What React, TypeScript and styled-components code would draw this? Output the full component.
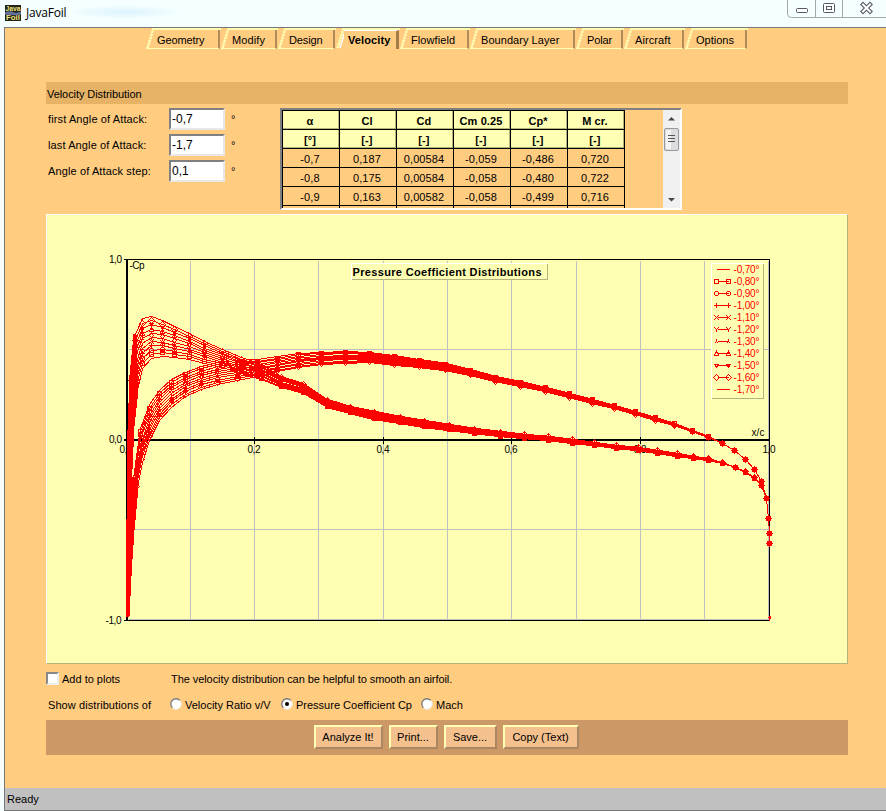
import React from "react";
import styled, { createGlobalStyle, css } from "styled-components";

const C = {
  orange: "#ffcc80",
  yellow: "#ffffb3",
  band: "#e6b366",
  footer: "#cc9966",
  button: "#f4c08e",
  status: "#c0c0c0",
};

const Global = createGlobalStyle`
  body { margin: 0; background: #f5ffff; overflow: hidden; }
  * { box-sizing: border-box; }
`;

const Window = styled.div`
  width: 886px;
  height: 811px;
  display: flex;
  flex-direction: column;
  font: 11px/14px "Liberation Sans", Arial, sans-serif;
  color: #000;
  white-space: nowrap;
  background: #f5ffff;
`;
const TitleBar = styled.header`
  height: 27px;
  flex: none;
  display: flex;
  align-items: flex-start;
  padding-left: 5px;
  background: radial-gradient(ellipse 60px 7px at 125px 12px, #dcf3fc, transparent);
`;
const AppIcon = styled.svg`
  width: 16px;
  height: 16px;
  margin-top: 5px;
  overflow: visible;
`;
const WindowTitle = styled.span`
  font: 12px/16px "Open Sans", "Noto Sans", sans-serif;
  letter-spacing: -0.2px;
  margin: 5px auto 0 5px;
`;
const WindowControls = styled.svg`
  width: 99px;
  height: 18px;
`;
const Client = styled.main`
  flex: 1;
  margin-left: 4px;
  border-top: 1px solid #777;
  border-left: 1px solid #777;
  border-bottom: 1px solid #777;
  background: ${C.orange};
  display: flex;
  flex-direction: column;
`;
const Tabs = styled.nav`
  display: flex;
  height: 21px;
  margin-left: 141px;
`;
const TabBox = styled.div<{ $w: number }>`
  width: ${(p) => p.$w}px;
  display: flex;
`;
const Slant = styled.svg`
  width: 8px;
  height: 21px;
  flex: none;
`;
const TabFace = styled.div`
  flex: 1;
  border-top: 2px solid ${C.yellow};
  padding-right: 1px;
  display: flex;
`;
const TabLabel = styled.div<{ $active?: boolean; $ls: number }>`
  flex: 1;
  padding: 3px 0 0 3px;
  letter-spacing: ${(p) => p.$ls}px;
  border-right: 2px solid #b28c58;
  border-bottom: 1px solid ${C.yellow};
  ${(p) =>
    p.$active &&
    css`
      font-weight: bold;
      padding: 2px 0 0 4px;
      border-top: 1px solid #fff;
      border-right: 3px solid #a67c4d;
      border-bottom: 0;
    `}
`;
const Content = styled.div`
  width: 802px;
  margin: 33px 0 0 41px;
  flex: 1;
`;
const Heading = styled.div`
  height: 22px;
  padding: 5px 0 0 1px;
  background: ${C.band};
  letter-spacing: -0.07px;
`;
const Settings = styled.section`
  display: flex;
  height: 110px;
  padding-top: 4px;
`;
const Fields = styled.div`
  width: 234px;
  display: flex;
  flex-direction: column;
  gap: 4px;
`;
const Field = styled.label`
  display: grid;
  grid-template-columns: 123px 56px 20px;
  height: 22px;
`;
const FieldText = styled.span`
  padding: 4px 0 0 2px;
  letter-spacing: 0.12px;
`;
const Unit = styled.span`
  padding: 4px 0 0 6px;
`;
const Input = styled.input`
  width: 56px;
  height: 22px;
  padding: 0 1px;
  border: 2px solid;
  border-color: #808080 #e8e8e8 #e8e8e8 #808080;
  border-radius: 0;
  outline: 0;
  background: #fff;
  font: 12px "Liberation Sans", Arial, sans-serif;
`;
const ScrollPane = styled.div`
  width: 402px;
  height: 102px;
  border: 2px solid;
  border-color: #808080 #fff #fff #808080;
  display: flex;
  justify-content: space-between;
  overflow: hidden;
`;
const Table = styled.div`
  display: grid;
  grid-template-columns: repeat(6, 57px);
  grid-auto-rows: 19px;
  border-top: 1px solid #000;
  border-left: 1px solid #000;
  height: 98px;
  overflow: hidden;
`;
const Cell = styled.div<{ $head?: boolean }>`
  border-right: 1px solid #000;
  border-bottom: 1px solid #000;
  padding-right: 2px;
  text-align: center;
  line-height: 21px;
  font-size: 11px;
  letter-spacing: 0.1px;
  ${(p) =>
    p.$head &&
    css`
      background: ${C.yellow};
      font-weight: bold;
      box-shadow: inset -1px -1px #b3b37d;
    `}
`;
const ScrollBar = styled.svg`
  width: 17px;
  height: 98px;
`;
const Chart = styled.svg`
  display: block;
  width: 802px;
  height: 450px;
  background: ${C.yellow};
  border: 1px solid;
  border-color: #fff #b3b37d #b3b37d #fff;
`;
const OptionRow = styled.div`
  display: flex;
  height: 26px;
  align-items: center;
`;
const OptionRows = styled.div`
  height: 56px;
  padding-top: 2px;
`;
const Lead = styled.div`
  width: 124px;
  display: flex;
  align-items: center;
`;
const Check = styled.span`
  width: 13px;
  height: 13px;
  margin: 0 3px 1px 0;
  background: #fff;
  border: 2px solid;
  border-color: #888 #eee #eee #888;
`;
const OptText = styled.span<{ $ls?: number; $indent?: number }>`
  letter-spacing: ${(p) => p.$ls ?? 0}px;
  margin-left: ${(p) => p.$indent ?? 0}px;
`;
const RadioItem = styled.label<{ $w: number }>`
  width: ${(p) => p.$w}px;
  display: flex;
  align-items: center;
`;
const RadioMark = styled.svg`
  width: 12px;
  height: 12px;
  margin: 0 3px 2px 0;
`;
const ButtonBar = styled.div`
  height: 35px;
  padding-top: 5px;
  display: flex;
  gap: 6px;
  padding-left: 268px;
  background: ${C.footer};
`;
const Button = styled.button<{ $w: number }>`
  width: ${(p) => p.$w}px;
  height: 24px;
  padding: 0 1px 0 0;
  border: 2px solid;
  border-color: ${C.yellow} #aa8662 #aa8662 ${C.yellow};
  background: ${C.button};
  color: #000;
  font: 11px "Liberation Sans", Arial, sans-serif;
  white-space: nowrap;
`;
const StatusBar = styled.footer`
  height: 22px;
  flex: none;
  padding: 4px 0 0 2px;
  background: ${C.status};
`;

const tabs: { label: string; w: number; ls: number }[] = [
  { label: "Geometry", w: 75, ls: -0.1 },
  { label: "Modify", w: 57, ls: 0.1 },
  { label: "Design", w: 58, ls: -0.1 },
  { label: "Velocity", w: 64, ls: 0.1 },
  { label: "Flowfield", w: 70, ls: 0.1 },
  { label: "Boundary Layer", w: 106, ls: 0.05 },
  { label: "Polar", w: 48, ls: -0.1 },
  { label: "Aircraft", w: 61, ls: 0.1 },
  { label: "Options", w: 63, ls: 0 },
];

const tableRows = [
  ["-0,7", "0,187", "0,00584", "-0,059", "-0,486", "0,720"],
  ["-0,8", "0,175", "0,00584", "-0,058", "-0,480", "0,722"],
  ["-0,9", "0,163", "0,00582", "-0,058", "-0,499", "0,716"],
  ["", "", "", "", "", ""],
];

/* Envelope of each airfoil surface: x, y for -0.7 deg, then x, y for -1.7 deg. */
type Pt = [number, number, number, number];
const same = (x: number, a: number, b = a): Pt => [x, a, x, b];

const suction: Pt[] = [
  [127, 616, 127, 612], [128.5, 550, 127.5, 520], [130, 480, 128.5, 430], [132.5, 425, 130.5, 375],
  [136.5, 390, 134.5, 334],
  same(142, 368, 318), same(151, 358, 316), same(162, 356, 320), same(174, 357, 326), same(189, 359, 333),
  same(204, 363, 341), same(222, 367, 349), same(241, 373, 357), same(261, 379, 364), same(281, 387, 376),
  same(303, 393, 383), same(327, 407, 399), same(350, 413, 406), same(374, 419, 411), same(400, 423, 416),
  same(424, 427, 420), same(449, 430, 424), same(474, 433, 428), same(500, 436, 431), same(524, 438, 434),
  same(548, 440, 436), same(572, 443, 439), same(594, 445, 442), same(616, 448, 445), same(638, 450, 447),
  same(657, 453, 450), same(677, 456, 453), same(693, 458, 456), same(708, 460, 458), same(722, 463, 462), same(735, 467),
  same(745, 472, 471), same(754, 478, 477), same(761, 485), same(766, 498), same(768, 518), same(769, 533), same(769, 543),
];
const pressure: Pt[] = [
  [127, 612, 127.5, 616], [128, 565, 130, 566], [130, 520, 132.5, 530], [133, 478, 136.5, 487],
  [140, 428, 141.5, 462],
  same(149, 404, 440), same(159, 390, 420), same(171, 379, 407), same(185, 372, 396), same(201, 366, 389),
  same(217, 362, 384), same(237, 360, 380), same(257, 359, 376), same(277, 356, 371), same(298, 353, 367),
  same(321, 352, 364), same(345, 351, 363), same(369, 352, 362), same(394, 355, 365), same(419, 359, 367),
  same(445, 363, 370), same(470, 369, 375), same(495, 376, 381), same(520, 381, 386), same(545, 387, 391),
  same(569, 393, 397), same(592, 399, 403), same(614, 405, 408), same(635, 411, 414), same(655, 417, 420),
  same(674, 423, 425), same(692, 430, 431), same(708, 436, 437), same(722, 443), same(734, 450), same(745, 459),
  same(754, 469), same(761, 481), same(766, 498), same(768, 518), same(769, 533), same(769, 543),
];

const markers = [
  "",
  "M-2-2h4v4h-4z",
  "M-1-2h2l1 1v2l-1 1h-2l-1-1v-2z",
  "M-2.5 0h5M0-2.5v5",
  "M-2.5-2.5l5 5M-2.5 2.5l5-5",
  "M-2-2L0 0L2-2M0 0v2.5",
  "M-2 2L0 0L2 2M0 0v-2.5",
  "M-2 1.5h4L0-2z",
  "M-2-1.5h4L0 2z",
  "M-3 0L0-3L3 0L0 3z",
  "",
];

const at = (p: Pt, t: number) => [
  Math.round(p[0] + (p[2] - p[0]) * t),
  Math.round(p[1] + (p[3] - p[1]) * t),
];

const Red = styled.g`
  fill: none;
  stroke: #f00;
  stroke-width: 1px;
  shape-rendering: crispEdges;
`;
const Merged = styled.polygon<{ $w: number }>`
  fill: #f00;
  stroke: #f00;
  stroke-width: ${(p) => p.$w}px;
`;
const Small = styled.text<{ $red?: boolean }>`
  font: 10px "Liberation Sans", Arial, sans-serif;
  fill: ${(p) => (p.$red ? "#f00" : "#000")};
`;
const ChartTitle = styled.text`
  font: bold 11px "Liberation Sans", Arial, sans-serif;
`;

/* Outline between the two extreme curves of a surface. */
function outline(part: Pt[]) {
  return [
    ...part.map((p) => `${p[0]},${p[1]}`),
    ...[...part].reverse().map((p) => `${p[2]},${p[3]}`),
  ].join(" ");
}
const tail = (surface: Pt[], from: number) => outline(surface.filter((p) => p[0] >= from && p[0] < 720));

function Curves() {
  return (
    <Red>
      {/* The curves merge into solid bands near the nose and along the tail. */}
      <Merged $w={3} points={outline(suction.slice(0, 5))} />
      <Merged $w={3} points={outline(pressure.slice(0, 4))} />
      <Merged $w={1.5} points={tail(suction, 327)} />
      <Merged $w={1.5} points={tail(pressure, 419)} />
      {[suction, pressure].map((surface, s) =>
        markers.map((m, k) => {
          const pts = surface.map((p) => at(p, k / 10));
          return (
            <g key={`${s}-${k}`}>
              <polyline points={pts.map((p) => p.join(",")).join(" ")} />
              {m &&
                pts
                  .filter((_, i) => i > 2)
                  .map((p, i) => <path key={i} d={m} transform={`translate(${p[0]} ${p[1]})`} />)}
            </g>
          );
        })
      )}
      <path d="M767 617h3M769 615v5M768 616h2M768 618h2" />
    </Red>
  );
}

function Bevel({ x, y, w, h }: { x: number; y: number; w: number; h: number }) {
  return (
    <g fill="none" shapeRendering="crispEdges">
      <rect x={x} y={y} width={w} height={h} fill={C.yellow} />
      <path d={`M${x} ${y + h}V${y}H${x + w}`} stroke="#fff" />
      <path d={`M${x} ${y + h}H${x + w}V${y}`} stroke="#b3b37d" />
    </g>
  );
}

function Plot() {
  const gx = [190, 254, 318, 383, 447, 511, 576, 640, 704, 768];
  return (
    <Chart viewBox="47 215 800 448">
      <g transform="translate(.5 .5)">
        <g stroke="#c0c0c0" shapeRendering="crispEdges">
          {gx.map((x) => <path key={x} d={`M${x} 260V619`} />)}
          {[349, 529, 619].map((y) => <path key={y} d={`M128 ${y}H768`} />)}
        </g>
        <g fill="#000" shapeRendering="crispEdges">
          <path d="M123.5 258.5H769.5V259.5H123.5zM123.5 619.5H769.5V620.5H123.5zM768.5 258.5H769.5V620.5H768.5zM125.5 258.5H127.5V620.5H125.5zM123.5 438.5H769.5V440.5H123.5z" />
          {[254, 383, 511, 640].map((x) => <path key={x} d={`M${x - 0.5} 436.5h1v7h-1z`} />)}
        </g>
        <Small x={108.5} y={262} textLength={13}>1,0</Small>
        <Small x={108.5} y={442} textLength={13}>0,0</Small>
        <Small x={105} y={623} textLength={16}>-1,0</Small>
        <Small x={119} y={452} textLength={13}>0,0</Small>
        <Small x={247} y={452} textLength={13}>0,2</Small>
        <Small x={376} y={452} textLength={13}>0,4</Small>
        <Small x={504} y={452} textLength={13}>0,6</Small>
        <Small x={633} y={452} textLength={13}>0,8</Small>
        <Small x={762} y={452} textLength={13}>1,0</Small>
        <Small x={129} y={268} textLength={15}>-Cp</Small>
        <Small x={751} y={435} textLength={13}>x/c</Small>
        <Curves />
        <Bevel x={351} y={263} w={196} h={16} />
        <ChartTitle x={352} y={275.5} textLength={189}>Pressure Coefficient Distributions</ChartTitle>
        <Bevel x={711} y={263} w={52} h={135} />
        {markers.map((m, k) => (
          <g key={k} transform={`translate(0 ${269 + k * 12})`}>
            <Red>
              <path d={m ? "M717 0H728" : "M716 0H729"} />
              {m && <path d={m} transform="translate(716 0)" />}
              {m && <path d={m} transform="translate(728 0)" />}
            </Red>
            <Small $red x={733} y={3.5} textLength={26}>{k < 3 ? `-0,${7 + k}0°` : `-1,${k - 3}0°`}</Small>
          </g>
        ))}
      </g>
    </Chart>
  );
}

function Radio({ on }: { on?: boolean }) {
  return (
    <RadioMark viewBox="0 0 12 12">
      <circle cx="6" cy="6" r="5.2" fill="#fff" stroke="#eee" />
      <path d="M2.3 9.7A5.2 5.2 0 0 1 9.7 2.3" fill="none" stroke="#777" strokeWidth="1.3" />
      {on && <circle cx="6" cy="6" r="2" />}
    </RadioMark>
  );
}

export default function App() {
  return (
    <Window>
      <Global />
      <TitleBar>
        <AppIcon viewBox="0 0 16 16">
          <rect width="16" height="16" fill="#222218" />
          <path d="M0 7.5q4-2 8-.5t8-.5v3q-6 1.5-16 0z" fill="#62719b" />
          <g fill="#eee27c" fontFamily="Liberation Sans" fontSize="7" fontWeight="bold">
            <text x="0.5" y="6" textLength="15" lengthAdjust="spacingAndGlyphs">Java</text>
            <text x="1" y="15" textLength="14" lengthAdjust="spacingAndGlyphs">Foil</text>
          </g>
        </AppIcon>
        <WindowTitle>JavaFoil</WindowTitle>
        <WindowControls viewBox="787 0 99 18">
          <path d="M787.5 0V14q0 3.5 4 3.5H886M815.5 0V17M842.5 0V17" fill="none" stroke="#a3a8a8" />
          <g fill="#fff" stroke="#555865">
            <rect x="796.5" y="8.5" width="11" height="4" rx="1" />
            <rect x="823.5" y="3.5" width="11" height="9" rx="1" />
            <rect x="826.5" y="6.5" width="5" height="3" />
          </g>
          <path d="M863 4.5L870 11.5M870 4.5L863 11.5" stroke="#555865" strokeWidth="4.2" strokeLinecap="square" />
          <path d="M863 4.5L870 11.5M870 4.5L863 11.5" stroke="#fff" strokeWidth="2" strokeLinecap="square" />
        </WindowControls>
      </TitleBar>
      <Client>
        <Tabs>
          {tabs.map((t) => {
            const active = t.label === "Velocity";
            return (
              <TabBox key={t.label} $w={t.w}>
                <Slant viewBox="0 0 8 21">
                  <path d="M1.5 20L7.5 0" stroke={C.yellow} strokeWidth="2.4" strokeDasharray="2.5 .6" fill="none" />
                  {active ? (
                    <path d="M4 20L9 3" stroke="#fff" strokeWidth="1.5" />
                  ) : (
                    <path d="M0 20.5H8" stroke={C.yellow} />
                  )}
                </Slant>
                <TabFace>
                  <TabLabel $active={active} $ls={t.ls}>{t.label}</TabLabel>
                </TabFace>
              </TabBox>
            );
          })}
        </Tabs>
        <Content>
          <Heading>Velocity Distribution</Heading>
          <Settings>
            <Fields>
              <Field><FieldText>first Angle of Attack:</FieldText><Input defaultValue="-0,7" /><Unit>°</Unit></Field>
              <Field><FieldText>last Angle of Attack:</FieldText><Input defaultValue="-1,7" /><Unit>°</Unit></Field>
              <Field><FieldText>Angle of Attack step:</FieldText><Input defaultValue="0,1" /><Unit>°</Unit></Field>
            </Fields>
            <ScrollPane>
              <Table>
                {["α", "Cl", "Cd", "Cm 0.25", "Cp*", "M cr.", "[°]", "[-]", "[-]", "[-]", "[-]", "[-]"].map((h, i) => (
                  <Cell key={i} $head>{h}</Cell>
                ))}
                {tableRows.flat().map((v, i) => <Cell key={i}>{v}</Cell>)}
              </Table>
              <ScrollBar viewBox="0 0 17 98">
                <rect width="17" height="98" fill="#f0f0f0" />
                <path d="M5 10.5L8.5 7L12 10.5zM5 88L8.5 91.5L12 88z" fill="#444" />
                <rect x="1.5" y="18.5" width="14" height="22" rx="1.5" fill="#dcdce0" stroke="#999" />
                <rect x="3" y="20" width="5" height="19" fill="#f4f4f4" />
                <path d="M5 25.5h7M5 28.5h7M5 31.5h7" stroke="#555" />
              </ScrollBar>
            </ScrollPane>
          </Settings>
          <Plot />
          <OptionRows>
            <OptionRow>
              <Lead><Check /><OptText>Add to plots</OptText></Lead>
              <OptText $ls={-0.07} $indent={1}>The velocity distribution can be helpful to smooth an airfoil.</OptText>
            </OptionRow>
            <OptionRow>
              <Lead><OptText $indent={2} $ls={0.08}>Show distributions of</OptText></Lead>
              <RadioItem $w={111}><Radio /><OptText>Velocity Ratio v/V</OptText></RadioItem>
              <RadioItem $w={140}><Radio on /><OptText>Pressure Coefficient Cp</OptText></RadioItem>
              <RadioItem $w={60}><Radio /><OptText>Mach</OptText></RadioItem>
            </OptionRow>
          </OptionRows>
          <ButtonBar>
            <Button $w={69}>Analyze It!</Button>
            <Button $w={49}>Print...</Button>
            <Button $w={53}>Save...</Button>
            <Button $w={76}>Copy (Text)</Button>
          </ButtonBar>
        </Content>
        <StatusBar>Ready</StatusBar>
      </Client>
    </Window>
  );
}
